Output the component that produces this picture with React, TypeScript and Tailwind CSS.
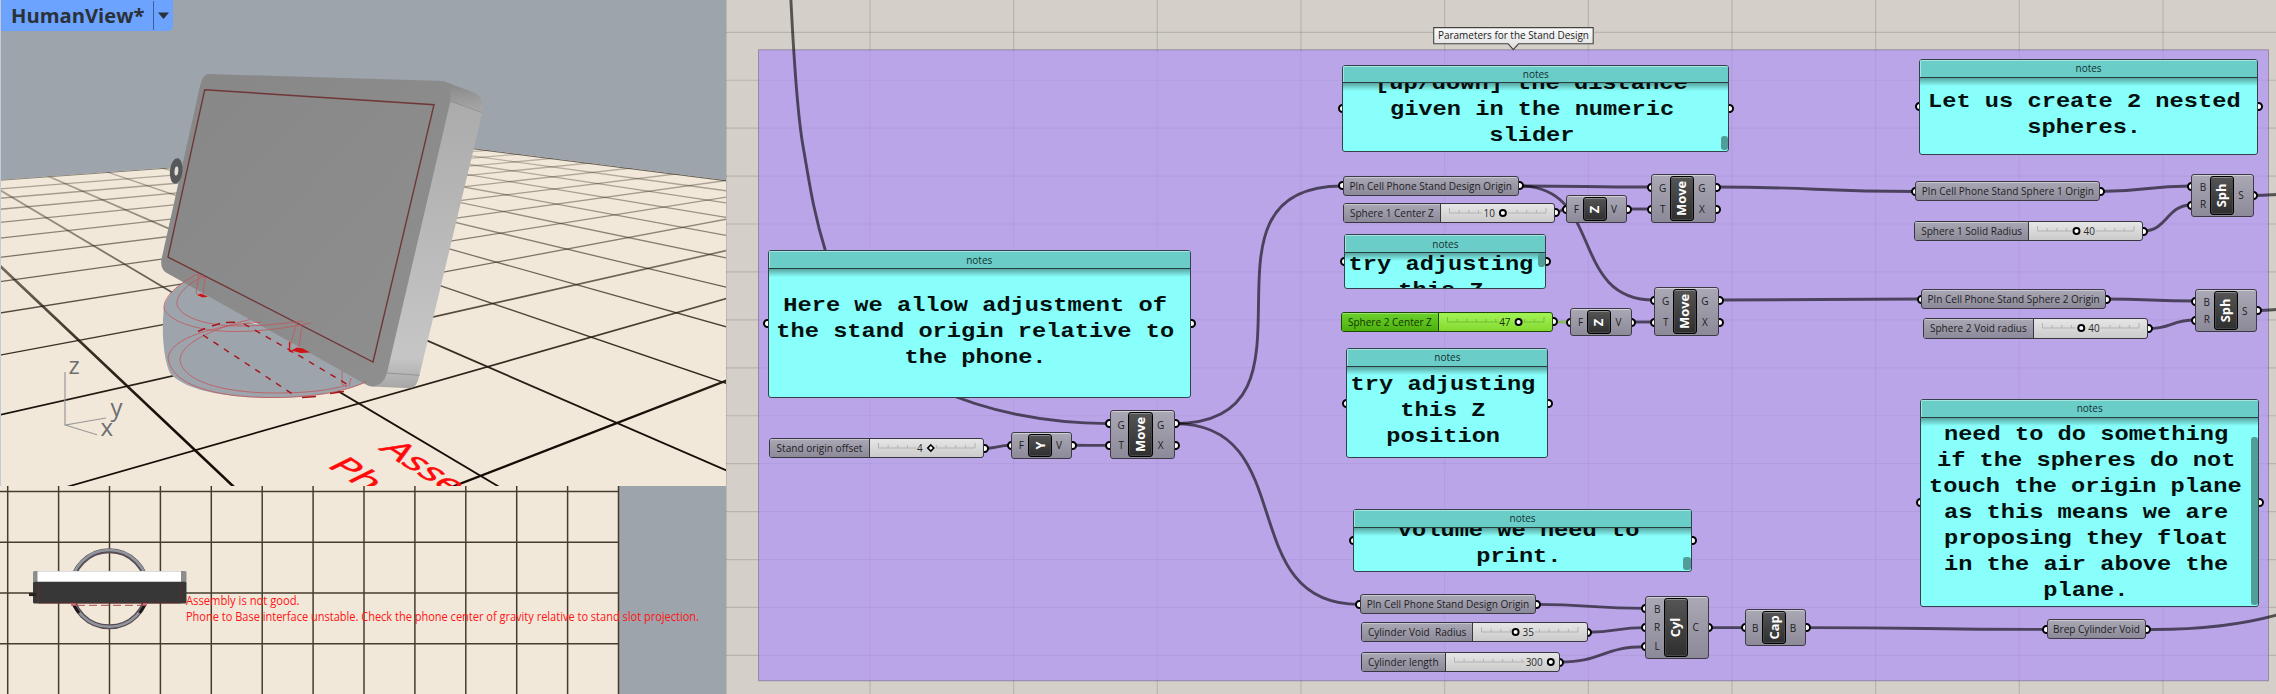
import type { ReactNode } from 'react';

const CANVAS_X = 726;

type Box = { x: number; y: number; x2: number; y2: number };

const place = (b: Box) => ({
  left: b.x - CANVAS_X,
  top: b.y,
  width: b.x2 - b.x,
  height: b.y2 - b.y,
});

/* ---------- node canvas pieces ---------- */

function Grip({ x, y }: { x: number; y: number }) {
  return (
    <span
      className="absolute size-[9px] rounded-full border-2 border-black bg-white"
      style={{ left: x - CANVAS_X - 4.5, top: y - 4.5 }}
    />
  );
}

type PanelData = Box & {
  grip: number;
  baseline: number;
  lines: string[];
  thumb?: [number, number];
};

const panels: PanelData[] = [
  { x: 767.5, y: 250.3, x2: 1191, y2: 397.7, grip: 323.5, baseline: 310.7, lines: ['Here we allow adjustment of', 'the stand origin relative to', 'the phone.'] },
  { x: 1342.3, y: 64.7, x2: 1729.3, y2: 151.8, grip: 108, baseline: 88.7, lines: ['[up/down] the distance', 'given in the numeric', 'slider'], thumb: [136, 150.3] },
  { x: 1344.3, y: 234.3, x2: 1546.4, y2: 288.8, grip: 261.3, baseline: 270, lines: ['try adjusting', 'this Z'], thumb: [253, 267] },
  { x: 1346.3, y: 348.2, x2: 1548.4, y2: 458.3, grip: 403.3, baseline: 389.3, lines: ['try adjusting', 'this Z', 'position'] },
  { x: 1353.2, y: 509.2, x2: 1692, y2: 571.6, grip: 540.4, baseline: 535.3, lines: ['volume we need to', 'print.'], thumb: [556.7, 570] },
  { x: 1919.2, y: 59, x2: 2258, y2: 154.8, grip: 106.3, baseline: 106.7, lines: ['Let us create 2 nested', 'spheres.'] },
  {
    x: 1920.2, y: 399.2, x2: 2259.2, y2: 606.8, grip: 502.9, baseline: 413.6,
    lines: ['                   g', 'need to do something', 'if the spheres do not', 'touch the origin plane', 'as this means we are', 'proposing they float', 'in the air above the', 'plane.'],
    thumb: [437, 605.3],
  },
];

function Panel(p: PanelData) {
  return (
    <>
      <Grip x={p.x} y={p.grip} />
      <Grip x={p.x2} y={p.grip} />
      <div className="absolute flex flex-col overflow-hidden rounded-[3px] border border-[#35414a] bg-[#88fffa]" style={place(p)}>
        <div className="flex h-[17.5px] shrink-0 items-center justify-center border-b border-[#23403f] bg-[#6bcdc8] text-[10px] leading-none text-[#12302f] shadow-[inset_0_1px_0_#a5e4e0,inset_1px_0_0_#a5e4e0]">
          notes
        </div>
        <div className="relative min-h-0 flex-1 overflow-hidden">
          <div
            className="pr-2 text-center font-['Liberation_Mono',monospace] text-[20.5px] font-bold leading-[26px] whitespace-pre text-[#03100f]"
            style={{ marginTop: p.baseline - 17.6 - p.y - 18.5 }}
          >
            {p.lines.map((l) => (
              <div key={l} className="flex justify-center">
                <span className="scale-x-[1.155]">{l}</span>
              </div>
            ))}
          </div>
          <div className="absolute inset-x-0 top-0 h-2 bg-linear-to-b from-black/35 to-transparent" />
          {p.thumb && (
            <div
              className="absolute right-0 w-[7.5px] rounded-[3px] bg-[#4f9f98]"
              style={{ top: p.thumb[0] - p.y - 18.5, height: p.thumb[1] - p.thumb[0] }}
            />
          )}
        </div>
      </div>
    </>
  );
}

type ParamData = Box & { label: string };

const params: ParamData[] = [
  { x: 1342.5, y: 176, x2: 1519, y2: 195.8, label: 'Pln Cell Phone Stand Design Origin' },
  { x: 1359.7, y: 594.3, x2: 1536.2, y2: 614.4, label: 'Pln Cell Phone Stand Design Origin' },
  { x: 1915.2, y: 181.3, x2: 2100.5, y2: 201.5, label: 'Pln Cell Phone Stand Sphere 1 Origin' },
  { x: 1921, y: 289, x2: 2106.2, y2: 309, label: 'Pln Cell Phone Stand Sphere 2 Origin' },
  { x: 2046.5, y: 619.2, x2: 2146.4, y2: 639.4, label: 'Brep Cylinder Void' },
];

function Param(p: ParamData) {
  const mid = (p.y + p.y2) / 2;
  return (
    <>
      <Grip x={p.x} y={mid} />
      <Grip x={p.x2} y={mid} />
      <div
        className="absolute flex items-center justify-center rounded-[3px] border border-[#3d3a45] bg-linear-to-b from-[#aaa8b5] to-[#8c8a98] text-[10.05px] leading-none whitespace-pre text-[#1e1d24] shadow-[inset_0_1px_0_#c9c8d2]"
        style={place(p)}
      >
        {p.label}
      </div>
    </>
  );
}

type SliderData = Box & {
  split: number;
  label: string;
  value: string;
  handle: number;
  valueAfter?: boolean;
  diamond?: boolean;
  selected?: boolean;
};

const sliders: SliderData[] = [
  { x: 769.3, y: 438, x2: 984.3, y2: 458.3, split: 868.7, label: 'Stand origin offset', value: '4', handle: 930, diamond: true },
  { x: 1343.2, y: 202.7, x2: 1555.2, y2: 222.8, split: 1439.6, label: 'Sphere 1 Center Z', value: '10', handle: 1502 },
  { x: 1341.2, y: 312, x2: 1553.3, y2: 331.8, split: 1437.6, label: 'Sphere 2 Center Z', value: '47', handle: 1517.7, selected: true },
  { x: 1361, y: 622.2, x2: 1587.7, y2: 642.1, split: 1472.3, label: 'Cylinder Void  Radius', value: '35', handle: 1515.4, valueAfter: true },
  { x: 1361, y: 652, x2: 1559.8, y2: 672, split: 1444.5, label: 'Cylinder length', value: '300', handle: 1549.8 },
  { x: 1914.3, y: 221, x2: 2143.4, y2: 241, split: 2028, label: 'Sphere 1 Solid Radius', value: '40', handle: 2076, valueAfter: true },
  { x: 1923.2, y: 318.3, x2: 2148, y2: 338.6, split: 2032.6, label: 'Sphere 2 Void radius', value: '40', handle: 2080.4, valueAfter: true },
];

function Slider(s: SliderData) {
  const mid = (s.y + s.y2) / 2;
  const w = s.x2 - s.split - 1;
  const hx = s.handle - s.split;
  const body = s.selected ? 'from-[#a2f455] to-[#84d92f]' : 'from-[#e6e6e6] to-[#cbcbcb]';
  const head = s.selected ? 'from-[#6bd12a] to-[#4eb00d]' : 'from-[#aaa8b5] to-[#8c8a98]';
  const ticks = Array.from({ length: 11 }, (_, i) => 9 + i * 9.65);
  const tickColor = s.selected ? '#6fb238' : '#a9a9a9';
  const textStart = s.valueAfter ? hx + 7 : hx - 8;
  const vw = s.value.length * 5.7;
  const hide = s.valueAfter ? [hx - 5, hx + 8 + vw] : [hx - 9 - vw, hx + 5];
  return (
    <>
      <Grip x={s.x2} y={mid} />
      <div
        className={`absolute flex overflow-hidden rounded-[3px] border ${s.selected ? 'border-[#1e4a05]' : 'border-[#38363f]'} bg-linear-to-b ${body}`}
        style={place(s)}
      >
        <div
          className={`flex shrink-0 items-center justify-center border-r ${s.selected ? 'border-[#1e4a05] text-[#0f3500]' : 'border-[#38363f] text-[#1e1d24]'} bg-linear-to-b ${head} text-[10.05px] leading-none whitespace-pre shadow-[inset_0_1px_0_#ffffff55]`}
          style={{ width: s.split - s.x }}
        >
          {s.label}
        </div>
        <svg className="shrink-0" width={w} height={18} viewBox={`0.5 0 ${w} 18`}>
          {[[9, Math.min(hide[0], 105.5)], [Math.max(hide[1], 9), 105.5]].map(
            ([a, b]) => b > a && <path key={a} d={`M${a} 9H${b}`} stroke={tickColor} strokeWidth={0.8} />,
          )}
          {ticks.map(
            (t, i) =>
              (t < hide[0] || t > hide[1]) && (
                <path key={t} d={`M${t} ${i % 10 ? 6 : 4}V9`} stroke={tickColor} strokeWidth={0.8} />
              ),
          )}
          <text
            x={textStart}
            y={12.7}
            fontSize={10}
            fill={s.selected ? '#0f3500' : '#2b2b2b'}
            textAnchor={s.valueAfter ? 'start' : 'end'}
          >
            {s.value}
          </text>
          {s.diamond ? (
            <path d={`M${hx} 6l3 3-3 3-3-3z`} fill="#fff" stroke="#000" strokeWidth={1.6} />
          ) : (
            <circle cx={hx} cy={9} r={3} fill="#fff" stroke="#000" strokeWidth={1.9} />
          )}
        </svg>
      </div>
    </>
  );
}

type ComponentData = Box & { name: string; ins: [string, number][]; outs: [string, number][] };

const components: ComponentData[] = [
  { x: 1011, y: 431.7, x2: 1072.2, y2: 459.3, name: 'Y', ins: [['F', 445.3]], outs: [['V', 445.3]] },
  { x: 1109.5, y: 410.3, x2: 1175, y2: 459.3, name: 'Move', ins: [['G', 423.6], ['T', 445.4]], outs: [['G', 423.6], ['X', 445.4]] },
  { x: 1566, y: 195.3, x2: 1627, y2: 222.8, name: 'Z', ins: [['F', 209]], outs: [['V', 209]] },
  { x: 1651, y: 174, x2: 1716, y2: 222.8, name: 'Move', ins: [['G', 187], ['T', 209]], outs: [['G', 187], ['X', 209]] },
  { x: 1570.4, y: 308.3, x2: 1631.6, y2: 335.8, name: 'Z', ins: [['F', 322]], outs: [['V', 322]] },
  { x: 1654, y: 287, x2: 1719, y2: 335.8, name: 'Move', ins: [['G', 300], ['T', 322]], outs: [['G', 300], ['X', 322]] },
  { x: 1645.4, y: 596.3, x2: 1708.7, y2: 658.7, name: 'Cyl', ins: [['B', 608.4], ['R', 627.6], ['L', 646.7]], outs: [['C', 627.6]] },
  { x: 1745, y: 609, x2: 1806, y2: 646, name: 'Cap', ins: [['B', 627.6]], outs: [['B', 627.6]] },
  { x: 2191.3, y: 174, x2: 2253.6, y2: 216.8, name: 'Sph', ins: [['B', 186], ['R', 205]], outs: [['S', 195.4]] },
  { x: 2195, y: 289, x2: 2257.3, y2: 332, name: 'Sph', ins: [['B', 301], ['R', 320]], outs: [['S', 310.4]] },
];

function Ports({ items }: { items: [string, number][] }) {
  return (
    <div className="flex flex-1 flex-col items-center justify-around py-[2px] text-[10px] leading-none text-[#1e1d24]">
      {items.map(([n], i) => (
        <span key={i}>{n}</span>
      ))}
    </div>
  );
}

function Component(c: ComponentData) {
  return (
    <>
      {c.ins.map(([, y]) => (
        <Grip key={`i${y}`} x={c.x} y={y} />
      ))}
      {c.outs.map(([, y]) => (
        <Grip key={`o${y}`} x={c.x2} y={y} />
      ))}
      <div
        className="absolute flex rounded-[3px] border border-[#3d3a45] bg-linear-to-b from-[#aaa8b5] to-[#8c8a98] py-px shadow-[inset_0_1px_0_#d0cfd8]"
        style={place(c)}
      >
        <div className={c.name === 'Y' || c.name === 'Z' || c.name === 'Cap' ? 'flex w-[15.5px] pl-[3px]' : 'flex w-[17.5px] pl-1'}>
          <Ports items={c.ins} />
        </div>
        <div className="flex w-[24.5px] shrink-0 items-center justify-center rounded-[3px] border border-black bg-linear-to-b from-[#555555] to-[#2f2f2f] shadow-[inset_0_1px_0_#8a8a8a,inset_0_0_0_1px_#4a4a4a]">
          <span className="-rotate-90 text-[12.9px] leading-none font-bold text-white">{c.name}</span>
        </div>
        <div className="flex flex-1 pr-[5px]">
          <Ports items={c.outs} />
        </div>
      </div>
    </>
  );
}

/* Wire between two grips, leaving and arriving horizontally. */
const wire = (x1: number, y1: number, x2: number, y2: number, k = (x2 - x1) / 2) =>
  `M${x1} ${y1}C${x1 + k} ${y1} ${x2 - k} ${y2} ${x2} ${y2}`;

const wires = [
  'M790.8 -2C793.5 52 797 112 803 146S813 211 825.5 251',
  'M935 388C985 411 1040 423.2 1109 423.6',
  wire(984, 448.3, 1011, 445.3),
  wire(1073, 445.3, 1109, 445.4),
  wire(1175, 423.6, 1342, 186, 164),
  wire(1175, 423.6, 1359, 604.4, 126),
  wire(1519, 186, 1651, 187),
  wire(1519, 186, 1654, 300, 86),
  wire(1555, 212.7, 1566, 209),
  wire(1627, 209, 1651, 209),
  wire(1632, 322, 1654, 322),
  wire(1716, 187, 1915, 191.5),
  wire(1719, 300, 1921, 299),
  wire(2100, 191.5, 2191, 186),
  wire(2143, 231, 2191, 205),
  wire(2106, 299, 2195, 301),
  wire(2148, 328.6, 2195, 320),
  wire(2254, 195.5, 2290, 194),
  wire(2257, 310.5, 2290, 309),
  wire(1536, 604.4, 1645, 608.4),
  wire(1588, 632.2, 1645, 627.6),
  wire(1560, 662, 1645, 646.7),
  wire(1709, 627.6, 1745, 627.6),
  wire(1806, 627.6, 2046, 629.4),
  'M2146 629.5C2190 630 2235 626.5 2277 615',
];

function NodeCanvas() {
  const vx = Array.from({ length: 11 }, (_, i) => 726.3 + i * 143.67);
  const hy = Array.from({ length: 14 }, (_, i) => 32.3 + i * 47.93);
  return (
    <section className="relative min-w-0 flex-1 overflow-hidden bg-[#d4cfc8]">
      <svg className="absolute inset-0" width={1550} height={694} viewBox="726 0 1550 694">
        {vx.map((x) => (
          <path key={x} d={`M${x} 0V694`} stroke="#000" strokeOpacity={0.13} strokeWidth={1.2} />
        ))}
        {hy.map((y) => (
          <path key={y} d={`M726 ${y}H2276`} stroke="#000" strokeOpacity={0.13} strokeWidth={1.2} />
        ))}
        <rect x={758.5} y={49.8} width={1510} height={631} fill="rgb(176,147,246)" fillOpacity={0.7} stroke="#000" strokeOpacity={0.25} />
        <g fill="none" stroke="#000" strokeOpacity={0.6} strokeWidth={2.9}>
          {wires.map((d) => (
            <path key={d} d={d} />
          ))}
        </g>
        <path d="M1553 322H1570" stroke="#86bb62" strokeWidth={2.9} />
        <defs>
          <linearGradient id="tag" x1="0" y1="0" x2="0" y2="1">
            <stop offset="0" stopColor="#fdfdfd" />
            <stop offset="1" stopColor="#dcdcdc" />
          </linearGradient>
        </defs>
        <path d="M1433.7 27.6H1593.2V43.8H1518.5L1513.3 49.6L1508.2 43.8H1433.7Z" fill="url(#tag)" stroke="#45433f" strokeWidth={1.1} />
      </svg>
      <div className="absolute top-[27px] left-[707px] flex h-[17px] w-[161px] items-center justify-center text-[9.95px] leading-none whitespace-nowrap text-[#222]">
        Parameters for the Stand Design
      </div>
      {params.map((p) => <Param key={p.y} {...p} />)}
      {sliders.map((s) => <Slider key={s.y} {...s} />)}
      {components.map((c) => <Component key={`${c.x}`} {...c} />)}
      {panels.map((p) => <Panel key={p.y} {...p} />)}
    </section>
  );
}

/* ---------- perspective viewport ---------- */

function FloorGrid() {
  const va = [-216, 61.7];
  const vb = [1534, 68];
  const a = Array.from({ length: 12 }, (_, i) => 1.058 + i * 0.624);
  const b = Array.from({ length: 12 }, (_, i) => 2.583 + i * 0.9195);
  return (
    <g clipPath="url(#floor)">
      <rect x={0} y={140} width={726} height={346} fill="#f2e8da" />
      <g stroke="url(#fade)" fill="none">
        {a.map((c, i) => (
          <path key={c} d={`M${va[0]} ${va[1]}L${va[0] + 1300} ${va[1] + 1300 / c}`} strokeWidth={i === 0 ? 2.6 : i < 3 ? 1.8 : 1.3} />
        ))}
        {b.map((c, i) => (
          <path key={c} d={`M${vb[0]} ${vb[1]}L${vb[0] - 1600} ${vb[1] + 1600 / c}`} strokeWidth={i === 0 ? 2.3 : i < 3 ? 1.7 : 1.3} />
        ))}
      </g>
      <path d="M0 180.2L458.8 146.9L728 180.9" fill="none" stroke="#3d352b" strokeOpacity={0.6} strokeWidth={1.2} />
    </g>
  );
}

function PhoneStand() {
  const red = '#c4565a';
  return (
    <g fill="none">
      <path d="M196 274C174 286 163 300 163.5 312C161.5 335 164 360 170 373C184 390 225 398 275 398C320 397.5 350 390 372 380L300 300Z" fill="#9da4ab" />
      <path d="M249 322.5L262 321L288 328Q268 327 249 322.5Z" fill="#f2e8da" />
      <path d="M443 81L474 92.5Q484 97 482.8 111L419.5 375Q417 388 410 388.3L372 386.5Z" fill="url(#side)" />
      <path d="M443 81L474 92.5Q484 97 482.8 112L450.5 101.5Z" fill="url(#corner)" />
      <path d="M451 101.5L482 112.5M387 373L419.5 375.3" stroke="#8b8b8b" strokeWidth={0.8} />
      <path d="M208 74L443 81Q452 84 450.5 101L387 373Q383 386 372 386.5Q369 386.3 366 384.5L166 272.5Q160.5 269 161.3 260L200 86Q202.5 75 208 74Z" fill="url(#face)" />
      <path d="M204.7 89.7L434 104.7L373 362L168 257Z" stroke="#6f3738" strokeWidth={1.4} />
      <g stroke={red} strokeWidth={0.8}>
        <path d="M197 274.5C172 287 163.5 300 164 308C167 320 195 331.5 235 331.5C262 331.5 285 328 311 323" />
        <path d="M204 276C183 286 176 297 177 305C181 317 205 326 240 326C262 326 280 324 303 321" />
        <path d="M262 322C215 325 170 338 168 358C171 384 212 397.5 272 397.5C318 397.5 350 390 366 381.5" />
        <path d="M250 319.5C211 329 180 344 180 360C182 380 220 393 275 393C310 393 330 390 347 385" />
        <path d="M199 275L196 293L202 297M205 277L203 295M297 322L289 349M302 325L299 347M342 371V384L347 387M351 378L349 386M197 274.5L206 278" />
      </g>
      <g stroke="#a5151a" strokeWidth={1.4} strokeDasharray="6 6.5">
        <path d="M203 335L294 395" />
        <path d="M244 324L288 349L350 386" />
        <path d="M302 397.5L316 396.5M330 393.5L344 391.5" strokeDasharray="none" />
        <path d="M198 331.5L205 328.5M212 326L220 323.5M226 322.5L235 322.3" strokeDasharray="none" />
      </g>
      <path d="M197 295L201 293.8L208 296.5L203 297.5Z" fill="#cf1414" />
      <path d="M291 350.5L297 347.5L303 348.5L310 352.5L301 353Z" fill="#cf1414" />
      <path d="M289.5 342V351L293.5 352.5" stroke="#cf1414" strokeWidth={1.3} />
      <ellipse cx={176.2} cy={171} rx={6.3} ry={12.8} transform="rotate(6 176.2 171)" fill="#56585a" />
      <ellipse cx={176.4} cy={171} rx={1.9} ry={4.6} transform="rotate(6 176.2 171)" fill="#e4ddd2" />
    </g>
  );
}

function PerspectiveView() {
  return (
    <div className="relative h-[486px] bg-[#9da4ab]">
      <svg className="block" width={726} height={486} viewBox="0 0 726 486">
        <defs>
          <clipPath id="floor">
            <path d="M0 180L458.8 146.5L728 180.5V486H0Z" />
          </clipPath>
          <linearGradient id="fade" gradientUnits="userSpaceOnUse" x1="0" y1="150" x2="0" y2="420">
            <stop offset="0" stopColor="#2a2014" stopOpacity="0.25" />
            <stop offset="0.3" stopColor="#2a2014" stopOpacity="0.5" />
            <stop offset="0.7" stopColor="#1d150b" stopOpacity="0.85" />
            <stop offset="1" stopColor="#150e06" />
          </linearGradient>
          <linearGradient id="side" x1="0" y1="0" x2="0" y2="1">
            <stop offset="0" stopColor="#a9a9a9" />
            <stop offset="0.9" stopColor="#c6c6c6" />
            <stop offset="1" stopColor="#a6a6a6" />
          </linearGradient>
          <linearGradient id="corner" x1="0" y1="0" x2="0.1" y2="1">
            <stop offset="0" stopColor="#858585" />
            <stop offset="1" stopColor="#a6a6a6" />
          </linearGradient>
          <linearGradient id="face" x1="0" y1="0" x2="1" y2="1">
            <stop offset="0" stopColor="#878787" />
            <stop offset="1" stopColor="#8f8f8f" />
          </linearGradient>
        </defs>
        <FloorGrid />
        <PhoneStand />
        <g stroke="#9a9a98" strokeWidth={1.2} fill="none">
          <path d="M65 372V425L106 418M65 425L97 434.7" />
        </g>
        <g fill="#6b6f72" fontSize={24}>
          <text x={68.5} y={373.5}>z</text>
          <text x={110.5} y={416}>y</text>
          <text x={100.5} y={436}>x</text>
        </g>
        <g fill="#ff0a0a" stroke="#ff0a0a" strokeWidth={0.2} fontSize={10}>
          <text transform="matrix(3.35 2.15 -3 1.5 378 449)">Assembly</text>
          <text transform="matrix(3.35 2.15 -3 1.5 326 466)">Phone</text>
        </g>
        <path d="M0.5 0V486" stroke="#c6cad8" />
      </svg>
      <div className="absolute top-0 left-px flex h-[31px] w-[172px] items-center rounded-br-[5px] bg-[#6ba3ff] text-[#2b3138]">
        <span className="w-[152px] pl-[10px] text-[20.2px] leading-none font-bold">HumanView*</span>
        <span className="h-[29px] w-px bg-[#3f5f93]" />
        <svg className="ml-[4px]" width={12} height={8} viewBox="0 0 12 8">
          <path d="M0 0.5H11L5.5 7Z" fill="currentColor" />
        </svg>
      </div>
    </div>
  );
}

/* ---------- top viewport ---------- */

function TopView() {
  const vx = Array.from({ length: 13 }, (_, i) => 7.7 + i * 50.9);
  const hy = [491.4, 542.3, 593, 643.8];
  return (
    <svg className="block" width={726} height={208} viewBox="0 486 726 208">
      <rect x={0} y={486} width={726} height={208} fill="#9da4ab" />
      <rect x={0} y={486} width={618.8} height={208} fill="#f2e8da" />
      <g stroke="#453c2c" strokeWidth={1.5}>
        {vx.map((x) => <path key={x} d={`M${x} 486V694`} />)}
        {hy.map((y) => <path key={y} d={`M0 ${y}H618.8`} />)}
      </g>
      <circle cx={109.3} cy={588.8} r={38} fill="none" stroke="#5a4c55" strokeWidth={5} />
      <circle cx={109.3} cy={588.4} r={38.4} fill="none" stroke="#8f969e" strokeWidth={2.6} />
      <path d="M73 604L79 613M145.5 604L139.5 613" stroke="#1a1718" strokeWidth={3} />
      <path d="M77 605.3H143" stroke="#b04a4a" strokeWidth={1} strokeDasharray="8 4" />
      <rect x={33} y={571} width={153.5} height={12} rx={1.5} fill="#8d8d8d" />
      <rect x={37.5} y={571.3} width={143.5} height={10.7} fill="#fff" />
      <rect x={33} y={581.8} width={153.5} height={21.7} rx={1.5} fill="#373737" />
      <path d="M38.5 584V602.5M180.8 584V602.5M38.5 603H180.8" stroke="#6a2c2c" strokeWidth={0.8} />
      <path d="M29 594.6H36" stroke="#222" strokeWidth={3} />
      <path d="M71 604.5h5M143 604.5h4" stroke="#d0696c" strokeWidth={2.4} />
      <g fill="#ff1414" fontSize={11.8}>
        <text x={186} y={605.3} textLength={113.5} lengthAdjust="spacingAndGlyphs">Assembly is not good.</text>
        <text x={186} y={620.7} textLength={513} lengthAdjust="spacingAndGlyphs">
          Phone to Base interface unstable. Check the phone center of gravity relative to stand slot projection.
        </text>
      </g>
    </svg>
  );
}

function Viewports({ children }: { children: ReactNode }) {
  return <aside className="flex w-[726px] shrink-0 flex-col overflow-hidden">{children}</aside>;
}

export default function App() {
  return (
    <main className="flex h-[694px] w-[2276px] overflow-hidden font-['Open_Sans',sans-serif]">
      <Viewports>
        <PerspectiveView />
        <TopView />
      </Viewports>
      <NodeCanvas />
    </main>
  );
}
